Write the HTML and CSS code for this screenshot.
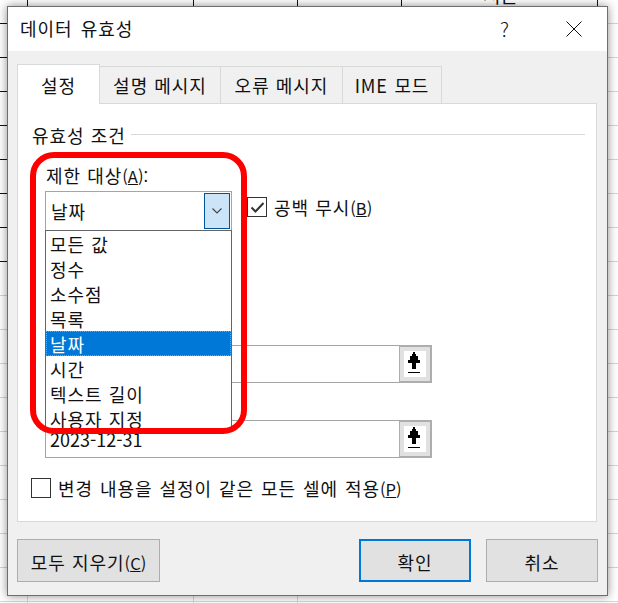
FILE: index.html
```html
<!DOCTYPE html>
<html lang="ko">
<head>
    <meta charset="UTF-8">
    <meta name="viewport" content="width=device-width, initial-scale=1.0">
    <title>데이터 유효성</title>
    <link rel="stylesheet" href="styles.css">
</head>

<body>
    <div class="sheet-cell">서손</div>

    <div class="dialog">
        <div class="titlebar">
            <span class="title">데이터 유효성</span>
            <span class="help">?</span>
            <svg class="close" width="16" height="16" viewBox="0 0 16 16">
                <path d="M0.5 0.5L15.5 15.5M15.5 0.5L0.5 15.5" stroke="#111" stroke-width="1" fill="none"/>
            </svg>
        </div>

        <div class="content">
            <div class="tabs">
                <div class="tab tab-active">설정</div>
                <div class="tab tab-w2">설명 메시지</div>
                <div class="tab tab-w3">오류 메시지</div>
                <div class="tab tab-w4"><span class="ime">IME 모드</span></div>
            </div>

            <div class="panel">
                <div class="section">
                    <span>유효성 조건</span>
                    <div class="section-line"></div>
                </div>

                <div class="field-label">제한 대상<span class="hotkey">(<u>A</u>):</span></div>

                <div class="combo-row">
                    <div class="combo">
                        <span>날짜</span>
                        <div class="combo-btn">
                            <svg width="10" height="6" viewBox="0 0 10 6">
                                <path d="M0.5 0.5L5 5L9.5 0.5" stroke="#444" stroke-width="1.1" fill="none"/>
                            </svg>
                        </div>
                    </div>

                    <div class="check-box check-small">
                        <svg width="15" height="13" viewBox="0 0 15 13">
                            <path d="M1.5 6.5L5.5 10.5L13.5 2" stroke="#333" stroke-width="2" fill="none"/>
                        </svg>
                    </div>
                    <span class="check-text check-text-up">공백 무시<span class="hotkey">(<u>B</u>)</span></span>

                    <ul class="dropdown">
                        <li>모든 값</li>
                        <li>정수</li>
                        <li>소수점</li>
                        <li>목록</li>
                        <li class="selected">날짜</li>
                        <li>시간</li>
                        <li>텍스트 길이</li>
                        <li>사용자 지정</li>
                    </ul>
                </div>

                <div class="range-row range-first">
                    <div class="range-input"></div>
                    <div class="range-btn">
                        <svg width="22" height="26" viewBox="0 0 22 26" shape-rendering="crispEdges">
                            <path d="M9 1h2v2h1v2h2v4h2v3h-4v6h-4v-6h-4v-3h2v-4h2v-2h1z" fill="#000"/>
                            <path d="M4 21h12v1h-12z" fill="#000"/>
                        </svg>
                    </div>
                </div>

                <div class="range-row range-second">
                    <div class="range-input range-value">2023-12-31</div>
                    <div class="range-btn">
                        <svg width="22" height="26" viewBox="0 0 22 26" shape-rendering="crispEdges">
                            <path d="M9 1h2v2h1v2h2v4h2v3h-4v6h-4v-6h-4v-3h2v-4h2v-2h1z" fill="#000"/>
                            <path d="M4 21h12v1h-12z" fill="#000"/>
                        </svg>
                    </div>
                </div>

                <div class="apply-row">
                    <div class="check-box"></div>
                    <span class="check-text">변경 내용을 설정이 같은 모든 셀에 적용<span class="hotkey">(<u>P</u>)</span></span>
                </div>
            </div>

            <div class="footer">
                <button type="button" class="btn btn-clear">모두 지우기<span class="hotkey">(<u>C</u>)</span></button>
                <button type="button" class="btn btn-ok">확인</button>
                <button type="button" class="btn btn-cancel">취소</button>
            </div>
        </div>

        <div class="red-ring"></div>
    </div>
</body>
</html>
```

FILE: styles.css
```css
body {
    margin: 0;
    width: 618px;
    height: 603px;
    overflow: hidden;
    position: relative;
    font-family: "Noto Sans CJK KR", "Noto Sans", sans-serif;
    font-size: 18px;
    letter-spacing: 1px;
    color: #111;
    background-color: #fff;
    background-image:
        repeating-linear-gradient(to bottom, transparent 0 23px, #d4d4d4 23px 24px, transparent 24px 34px),
        linear-gradient(#d4d4d4, #d4d4d4),
        linear-gradient(#d4d4d4, #d4d4d4),
        linear-gradient(#d4d4d4, #d4d4d4);
    background-size: auto, 1px 100%, 1px 100%, 1px 100%;
    background-position: 0 0, 27px 0, 193px 0, 297px 0;
    background-repeat: repeat, no-repeat, no-repeat, no-repeat;
}

/* dark cell borders of the selected range behind the dialog */
body::before {
    content: "";
    position: absolute;
    left: 0;
    top: 0;
    width: 7px;
    height: 262px;
    background: repeating-linear-gradient(to bottom, transparent 0 23px, #111 23px 24px, transparent 24px 34px);
}

body::after {
    content: "";
    position: absolute;
    left: 0;
    top: 0;
    width: 618px;
    height: 6px;
    background-image:
        linear-gradient(#111, #111),
        linear-gradient(#111, #111),
        linear-gradient(#111, #111),
        linear-gradient(#111, #111),
        linear-gradient(#111, #111);
    background-size: 1px 100%;
    background-repeat: no-repeat;
    background-position: 27px 0, 193px 0, 297px 0, 401px 0, 597px 0;
}

.sheet-cell {
    position: absolute;
    left: 483px;
    top: -19px;
    font-size: 19px;
    letter-spacing: 0;
}

.hotkey {
    font-size: 16.5px;
    letter-spacing: 0;
}

.dialog {
    position: absolute;
    left: 7px;
    top: 6px;
    z-index: 1;
    width: 601px;
    height: 590px;
    box-sizing: border-box;
    border: 1px solid #6e6e6e;
    background-color: #f0f0f0;
    box-shadow: 0 0 9px rgba(0, 0, 0, 0.45);
    display: flex;
    flex-direction: column;
}

.titlebar {
    height: 44px;
    flex-shrink: 0;
    background-color: #fff;
    display: flex;
    align-items: center;
    padding-left: 12px;
}

.title {
    flex: 1;
    word-spacing: 2px;
    margin-bottom: 2px;
}

.help {
    margin-right: 57px;
    font-size: 20px;
    font-weight: 300;
    letter-spacing: 0;
    margin-bottom: 2px;
}

.close {
    margin-right: 25px;
}

.content {
    flex: 1;
    padding: 13px 9px 0 9px;
}

.tabs {
    display: flex;
    align-items: flex-end;
    height: 39px;
}

.tab {
    height: 37px;
    box-sizing: border-box;
    border: 1px solid #d9d9d9;
    border-bottom: none;
    border-left: none;
    background-color: #f0f0f0;
    display: flex;
    align-items: center;
    justify-content: center;
}

.tab-active {
    width: 83px;
    height: 40px;
    margin-bottom: -1px;
    background-color: #fff;
    border-left: 1px solid #d9d9d9;
    position: relative;
    z-index: 1;
}

.tab-w2 {
    width: 121px;
}

.tab-w3 {
    width: 122px;
}

.tab-w4 {
    width: 99px;
}

.ime {
    word-spacing: 1px;
    letter-spacing: 0.8px;
}

.panel {
    width: 580px;
    height: 419px;
    box-sizing: border-box;
    border: 1px solid #d9d9d9;
    background-color: #fff;
    padding: 0 11px 0 14px;
}

.section {
    display: flex;
    align-items: center;
    height: 26px;
    margin-top: 18px;
}

.section-line {
    flex: 1;
    height: 1px;
    margin: -1px 0 0 5px;
    background-color: #d9d9d9;
}

.field-label {
    margin: 15px 0 0 14px;
    height: 24px;
    line-height: 24px;
}

.combo-row {
    position: relative;
    display: flex;
    align-items: flex-start;
    margin: 4px 0 0 13px;
    height: 40px;
}

.combo {
    width: 187px;
    height: 40px;
    box-sizing: border-box;
    border: 1px solid #a5a5a5;
    display: flex;
    align-items: center;
    justify-content: space-between;
    padding: 1px 1px 1px 5px;
}

.combo-btn {
    width: 26px;
    height: 36px;
    box-sizing: border-box;
    border: 1px solid #005499;
    background-color: #cce4f7;
    display: flex;
    align-items: center;
    justify-content: center;
}

.check-box {
    width: 20px;
    height: 20px;
    box-sizing: border-box;
    border: 1px solid #333;
    background-color: #fff;
    display: flex;
    align-items: center;
    justify-content: center;
}

.check-small {
    margin: 6px 0 0 15px;
}

.check-text {
    margin-left: 7px;
}

.check-text-up {
    line-height: 32px;
}

.dropdown {
    position: absolute;
    left: 0;
    top: 39px;
    z-index: 2;
    width: 187px;
    height: 200px;
    box-sizing: border-box;
    margin: 0;
    padding: 0;
    list-style: none;
    border: 1px solid #646464;
    background-color: #fff;
    overflow: hidden;
}

.dropdown li {
    height: 25px;
    line-height: 27px;
    padding-left: 4px;
}

.dropdown .selected {
    box-sizing: border-box;
    line-height: 25px;
    padding-left: 3px;
    color: #fff;
    background-color: #0078d7;
    border: 1px dotted #f08a24;
}

.range-row {
    display: flex;
    margin-left: 13px;
    width: 387px;
    height: 38px;
}

.range-first {
    margin-top: 114px;
}

.range-second {
    margin-top: 37px;
}

.range-input {
    flex: 1;
    box-sizing: border-box;
    border: 1px solid #a5a5a5;
    border-right: none;
    padding-left: 4px;
    line-height: 36px;
}

.range-value {
    letter-spacing: 0;
}

.range-btn {
    width: 33px;
    box-sizing: border-box;
    border: 2px solid #adadad;
    border-left: 1px solid #adadad;
    background-color: #e1e1e1;
    display: flex;
    align-items: center;
    justify-content: center;
}

.range-btn svg {
    background-color: #fff;
}

.apply-row {
    display: flex;
    align-items: center;
    margin: 20px 0 0 -1px;
    height: 20px;
    word-spacing: 0.8px;
    line-height: 24px;
}

.footer {
    display: flex;
    margin-top: 17px;
}

.btn {
    height: 43px;
    box-sizing: border-box;
    border: 1px solid #adadad;
    background-color: #e1e1e1;
    font: inherit;
    letter-spacing: 1px;
    color: #111;
    padding: 2px 0 0 0;
}

.btn-clear {
    width: 143px;
    margin-right: 199px;
}

.btn-ok {
    width: 112px;
    margin-right: 15px;
    border: 2px solid #0078d7;
}

.btn-cancel {
    width: 112px;
}

.red-ring {
    position: absolute;
    left: 22px;
    top: 145px;
    z-index: 3;
    width: 217px;
    height: 282px;
    box-sizing: border-box;
    border: 6px solid #ff0000;
    border-radius: 24px;
    pointer-events: none;
}
```
